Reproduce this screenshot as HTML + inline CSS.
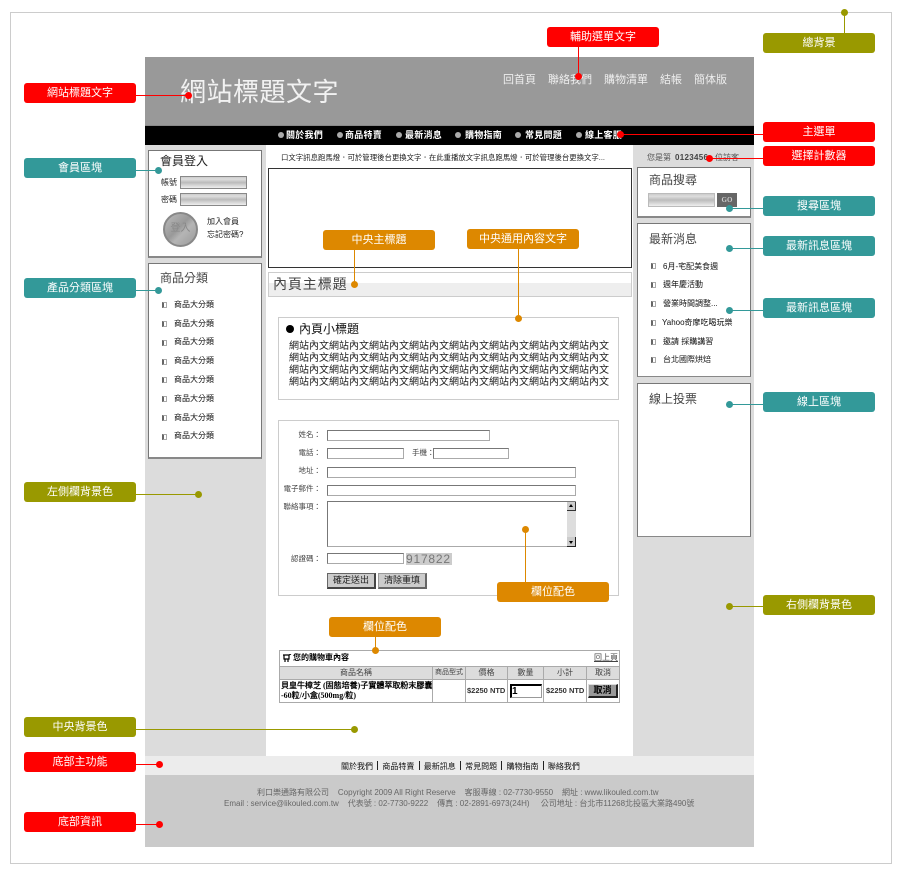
<!DOCTYPE html>
<html lang="zh-Hant"><head><meta charset="utf-8"><title>版面說明</title>
<style>
html,body{margin:0;padding:0;background:#fff}
body{position:relative;width:900px;height:872px;overflow:hidden;font-family:"Liberation Sans","WenQuanYi Zen Hei","Noto Sans CJK TC",sans-serif;color:#000}
div{position:absolute;box-sizing:border-box}
.t{white-space:nowrap;line-height:1}
.lb{width:112px;height:20px;border-radius:3px;color:#fff;font-size:11px;line-height:21px;text-align:center;z-index:5}
.r{background:#f00}.g{background:#339999}.o{background:#999900}.y{background:#dd8800}
.d{width:7px;height:7px;border-radius:50%;z-index:6}
.l{z-index:4}
.box{background:#fff;border:1px solid #777;border-bottom:2px solid #888}
.nav{color:#fff;font-size:9px;letter-spacing:.25px;font-weight:bold;top:131px}
.bul{width:6px;height:6px;border-radius:50%;background:#aaa;top:132px}
.h{font-size:12px;color:#444}
.it{font-size:8px;color:#111}
.sq{width:5px;height:6px;border:1px solid #aaa;border-left:2px solid #666;background:#fff}
.inp{background:#fff;border:1px solid #aaa;border-top-color:#777;border-left-color:#777}
.fl{font-size:7.5px;color:#444;text-align:right;width:60px;left:261px}
.grad{background:linear-gradient(#ccc,#ddd 20%,#bbb 50%,#eee);border:1px solid #888}
.btn{background:#ccc;border:1px solid #666;border-bottom:2px solid #444;border-right:2px solid #444;font-size:9px;text-align:center;line-height:13px;color:#222}
.th{background:#dcdcdc;color:#444;font-size:8px;text-align:center;line-height:12px;height:12px;top:667px}
.vl{background:#aaa;width:1px;top:667px;height:35px}
.para{font-size:10px;line-height:12px;left:289px;width:325px;color:#222;white-space:nowrap}
.sep{display:inline-block;width:1px;height:9px;background:#222;margin:0 4.2px;vertical-align:-1px}
</style></head><body>
<div style="left:10px;top:12px;width:882px;height:852px;border:1px solid #ccc"></div>

<!-- page -->
<div style="left:145px;top:57px;width:609px;height:790px;background:#dcdcdc"></div>
<div style="left:266px;top:144px;width:367px;height:612px;background:#fff"></div>
<div style="left:145px;top:57px;width:609px;height:69px;background:#999;border-bottom:1px solid #888"></div>
<div style="left:145px;top:126px;width:609px;height:19px;background:#000"></div>
<div style="left:145px;top:756px;width:609px;height:19px;background:#ececec"></div>
<div style="left:145px;top:775px;width:609px;height:72px;background:#cacaca"></div>

<div class="t" style="left:180px;top:79px;font-size:26px;color:#f2f2f2;letter-spacing:.5px">網站標題文字</div>
<div class="t" style="left:503px;top:75px;font-size:11px;color:#eee">回首頁</div>
<div class="t" style="left:548px;top:75px;font-size:11px;color:#eee">聯絡我們</div>
<div class="t" style="left:604px;top:75px;font-size:11px;color:#eee">購物清單</div>
<div class="t" style="left:660px;top:75px;font-size:11px;color:#eee">結帳</div>
<div class="t" style="left:694px;top:75px;font-size:11px;color:#eee">簡体版</div>

<div class="bul" style="left:278px"></div><div class="t nav" style="left:286px">關於我們</div>
<div class="bul" style="left:337px"></div><div class="t nav" style="left:345px">商品特賣</div>
<div class="bul" style="left:396px"></div><div class="t nav" style="left:405px">最新消息</div>
<div class="bul" style="left:455px"></div><div class="t nav" style="left:465px">購物指南</div>
<div class="bul" style="left:515px"></div><div class="t nav" style="left:525px">常見問題</div>
<div class="bul" style="left:576px"></div><div class="t nav" style="left:585px">線上客服</div>

<!-- left -->
<div class="box" style="left:148px;top:150px;width:114px;height:108px"></div>
<div class="t" style="left:160px;top:155px;font-size:12px;color:#222">會員登入</div>
<div class="t" style="left:161px;top:179px;font-size:8px;color:#222">帳號</div>
<div class="grad" style="left:180px;top:176px;width:67px;height:13px"></div>
<div class="t" style="left:161px;top:196px;font-size:8px;color:#222">密碼</div>
<div class="grad" style="left:180px;top:193px;width:67px;height:13px"></div>
<div style="left:163px;top:212px;width:35px;height:35px;border-radius:50%;background:linear-gradient(135deg,#bbb,#999 45%,#b5b5b5 60%,#999);border:2px solid #888;color:#888;font-size:10px;text-align:center;line-height:30px">登入</div>
<div class="t" style="left:207px;top:218px;font-size:8px;color:#222">加入會員</div>
<div class="t" style="left:207px;top:231px;font-size:8px;color:#222">忘記密碼?</div>

<div class="box" style="left:148px;top:263px;width:114px;height:196px"></div>
<div class="t h" style="left:160px;top:272px">商品分類</div>
<div class="sq" style="left:162px;top:302px"></div><div class="t it" style="left:174px;top:301px">商品大分類</div>
<div class="sq" style="left:162px;top:321px"></div><div class="t it" style="left:174px;top:320px">商品大分類</div>
<div class="sq" style="left:162px;top:340px"></div><div class="t it" style="left:174px;top:338px">商品大分類</div>
<div class="sq" style="left:162px;top:359px"></div><div class="t it" style="left:174px;top:357px">商品大分類</div>
<div class="sq" style="left:162px;top:377px"></div><div class="t it" style="left:174px;top:376px">商品大分類</div>
<div class="sq" style="left:162px;top:396px"></div><div class="t it" style="left:174px;top:395px">商品大分類</div>
<div class="sq" style="left:162px;top:415px"></div><div class="t it" style="left:174px;top:414px">商品大分類</div>
<div class="sq" style="left:162px;top:434px"></div><div class="t it" style="left:174px;top:432px">商品大分類</div>

<!-- center -->
<div class="t" style="left:281px;top:154px;font-size:7.4px;color:#222">口文字訊息跑馬燈．可於管理後台更換文字．在此重播放文字訊息跑馬燈．可於管理後台更換文字...</div>
<div style="left:268px;top:168px;width:364px;height:100px;border:1px solid #333;background:#fff"></div>
<div style="left:268px;top:272px;width:364px;height:25px;border:1px solid #ccc;background:linear-gradient(#fff 0,#fff 10px,#eee 10px)"></div>
<div class="t" style="left:273px;top:277px;font-size:14px;color:#444;letter-spacing:.9px">內頁主標題</div>
<div style="left:278px;top:317px;width:341px;height:83px;border:1px solid #ccc"></div>
<div style="left:286px;top:325px;width:8px;height:8px;border-radius:50%;background:#000"></div>
<div class="t" style="left:299px;top:323px;font-size:12px;color:#111">內頁小標題</div>
<div class="para" style="top:341px">網站內文網站內文網站內文網站內文網站內文網站內文網站內文網站內文</div>
<div class="para" style="top:353px">網站內文網站內文網站內文網站內文網站內文網站內文網站內文網站內文</div>
<div class="para" style="top:365px">網站內文網站內文網站內文網站內文網站內文網站內文網站內文網站內文</div>
<div class="para" style="top:377px">網站內文網站內文網站內文網站內文網站內文網站內文網站內文網站內文</div>

<div style="left:278px;top:420px;width:341px;height:176px;border:1px solid #ccc"></div>
<div class="t fl" style="top:431px">姓名：</div><div class="inp" style="left:327px;top:430px;width:163px;height:11px"></div>
<div class="t fl" style="top:449px">電話：</div><div class="inp" style="left:327px;top:448px;width:77px;height:11px"></div>
<div class="t" style="left:412px;top:449px;font-size:7.5px;color:#444">手機：</div><div class="inp" style="left:433px;top:448px;width:76px;height:11px"></div>
<div class="t fl" style="top:467px">地址：</div><div class="inp" style="left:327px;top:467px;width:249px;height:11px"></div>
<div class="t fl" style="top:485px">電子郵件：</div><div class="inp" style="left:327px;top:485px;width:249px;height:11px"></div>
<div class="t fl" style="top:503px">聯絡事項：</div><div class="inp" style="left:327px;top:501px;width:249px;height:46px"></div>
<div style="left:567px;top:502px;width:9px;height:45px;background:#ddd"></div>
<div style="left:567px;top:502px;width:9px;height:9px;background:#ccc;border:1px solid #333;border-width:0 1px 1px 0"></div>
<div style="left:567px;top:537px;width:9px;height:10px;background:#ccc;border:1px solid #222;border-width:0 1px 1px 0"></div>
<div style="left:569px;top:504px;border:2px solid transparent;border-bottom:3px solid #000;border-top:0"></div>
<div style="left:569px;top:541px;border:2px solid transparent;border-top:3px solid #000;border-bottom:0"></div>
<div class="t fl" style="top:555px">認證碼：</div><div class="inp" style="left:327px;top:553px;width:77px;height:11px"></div>
<div class="t" style="left:406px;top:553px;width:46px;height:12px;background:#ccc;color:#777;font-size:12px;line-height:12px;letter-spacing:.8px;overflow:hidden">917822</div>
<div class="btn" style="left:327px;top:573px;width:49px;height:16px">確定送出</div>
<div class="btn" style="left:378px;top:573px;width:49px;height:16px;border-color:#999 #666 #666 #999">清除重填</div>

<!-- table -->
<div style="left:279px;top:650px;width:341px;height:53px;border:1px solid #aaa"></div>
<div style="left:280px;top:666px;width:339px;height:1px;background:#aaa"></div>
<div class="th" style="left:280px;width:152px">商品名稱</div>
<div class="th" style="left:433px;width:32px;font-size:7px">商品型式</div>
<div class="th" style="left:466px;width:41px">價格</div>
<div class="th" style="left:508px;width:35px">數量</div>
<div class="th" style="left:544px;width:42px">小計</div>
<div class="th" style="left:587px;width:32px">取消</div>
<div style="left:280px;top:679px;width:339px;height:1px;background:#aaa"></div>
<div class="vl" style="left:432px"></div><div class="vl" style="left:465px"></div><div class="vl" style="left:507px"></div><div class="vl" style="left:543px"></div><div class="vl" style="left:586px"></div>
<svg style="position:absolute;left:283px;top:654px" width="9" height="9" viewBox="0 0 9 9"><path d="M0 1H6V5H1V1M2 5V8M5 5V8M6 1L8 0" fill="none" stroke="#000" stroke-width="1.2"/></svg>
<div class="t" style="left:293px;top:654px;font-size:8px;font-weight:bold">您的購物車內容</div>
<div class="t" style="left:594px;top:654px;font-size:8px;color:#444;text-decoration:underline">回上頁</div>
<div class="t" style="left:281px;top:681px;font-size:8px;line-height:10px;font-weight:bold;font-family:'Liberation Serif','WenQuanYi Zen Hei',serif">貝皇牛樟芝 (固態培養)子實體萃取粉末膠囊<br>-60粒/小盒(500mg/粒)</div>
<div class="t" style="left:467px;top:687px;font-size:7.5px;font-weight:bold;color:#333">$2250 NTD</div>
<div style="left:510px;top:684px;width:32px;height:14px;background:#fff;border:1px solid #999;border-top:2px solid #000;border-left:2px solid #000;font-size:10px;font-weight:bold;line-height:11px">1</div>
<div class="t" style="left:546px;top:687px;font-size:7.5px;font-weight:bold;color:#333">$2250 NTD</div>
<div style="left:588px;top:684px;width:30px;height:14px;background:#999;border-right:2px solid #222;border-bottom:2px solid #222;border-top:1px solid #ddd;border-left:1px solid #ddd;font-size:9px;font-weight:bold;text-align:center;line-height:11px">取消</div>

<!-- right -->
<div class="t" style="left:647px;top:154px;font-size:8px;color:#555">您是第</div>
<div class="t" style="left:675px;top:154px;font-size:8px;font-weight:bold;color:#444;letter-spacing:.3px">0123456</div>
<div class="t" style="left:715px;top:154px;font-size:8px;color:#555">位訪客</div>
<div class="box" style="left:637px;top:167px;width:114px;height:51px"></div>
<div class="t h" style="left:649px;top:174px">商品搜尋</div>
<div class="grad" style="left:648px;top:193px;width:67px;height:14px;border-color:#bbb"></div>
<div style="left:717px;top:193px;width:20px;height:14px;background:#666;color:#ccc;font-size:7px;font-weight:bold;text-align:center;line-height:14px;font-family:'Liberation Serif',serif">GO</div>

<div class="box" style="left:637px;top:223px;width:114px;height:154px;border-bottom-width:1px"></div>
<div class="t h" style="left:649px;top:233px">最新消息</div>
<div class="sq" style="left:651px;top:263px"></div><div class="t it" style="left:663px;top:263px">6月-宅配美食週</div>
<div class="sq" style="left:651px;top:282px"></div><div class="t it" style="left:663px;top:281px">週年慶活動</div>
<div class="sq" style="left:651px;top:301px"></div><div class="t it" style="left:663px;top:300px">營業時間調整...</div>
<div class="sq" style="left:651px;top:320px"></div><div class="t it" style="left:662px;top:319px">Yahoo奇摩吃喝玩樂</div>
<div class="sq" style="left:651px;top:339px"></div><div class="t it" style="left:663px;top:338px">邀請 採購講習</div>
<div class="sq" style="left:651px;top:357px"></div><div class="t it" style="left:663px;top:356px">台北國際烘焙</div>

<div class="box" style="left:637px;top:383px;width:114px;height:154px;border-bottom-width:1px"></div>
<div class="t h" style="left:649px;top:393px">線上投票</div>

<!-- footer -->
<div class="t" style="left:341px;top:761px;font-size:8px;color:#111">關於我們<span class="sep"></span>商品特賣<span class="sep"></span>最新訊息<span class="sep"></span>常見問題<span class="sep"></span>購物指南<span class="sep"></span>聯絡我們</div>
<div class="t" style="left:257px;top:789px;font-size:8px;color:#666">利口樂通路有限公司 &nbsp;&nbsp; Copyright 2009 All Right Reserve &nbsp;&nbsp; 客服專線 : 02-7730-9550 &nbsp;&nbsp; 網址 : www.likouled.com.tw</div>
<div class="t" style="left:224px;top:800px;font-size:8px;color:#666">Email : service@likouled.com.tw &nbsp;&nbsp; 代表號 : 02-7730-9222 &nbsp;&nbsp; 傳真 : 02-2891-6973(24H) &nbsp;&nbsp;&nbsp; 公司地址 : 台北市11268北投區大業路490號</div>

<!-- annotations -->
<div class="lb r" style="left:24px;top:83px">網站標題文字</div><div class="l r" style="left:136px;top:95px;width:52px;height:1px"></div><div class="d r" style="left:185px;top:92px"></div>
<div class="lb g" style="left:24px;top:158px">會員區塊</div><div class="l g" style="left:136px;top:170px;width:22px;height:1px"></div><div class="d g" style="left:155px;top:167px"></div>
<div class="lb g" style="left:24px;top:278px">產品分類區塊</div><div class="l g" style="left:136px;top:290px;width:22px;height:1px"></div><div class="d g" style="left:155px;top:287px"></div>
<div class="lb o" style="left:24px;top:482px">左側欄背景色</div><div class="l o" style="left:136px;top:494px;width:62px;height:1px"></div><div class="d o" style="left:195px;top:491px"></div>
<div class="lb o" style="left:24px;top:717px">中央背景色</div><div class="l o" style="left:136px;top:729px;width:218px;height:1px"></div><div class="d o" style="left:351px;top:726px"></div>
<div class="lb r" style="left:24px;top:752px">底部主功能</div><div class="l r" style="left:136px;top:764px;width:23px;height:1px"></div><div class="d r" style="left:156px;top:761px"></div>
<div class="lb r" style="left:24px;top:812px">底部資訊</div><div class="l r" style="left:136px;top:824px;width:23px;height:1px"></div><div class="d r" style="left:156px;top:821px"></div>

<div class="lb o" style="left:763px;top:33px">總背景</div><div class="l o" style="left:844px;top:12px;width:1px;height:21px"></div><div class="d o" style="left:841px;top:9px"></div>
<div class="lb r" style="left:547px;top:27px">輔助選單文字</div><div class="l r" style="left:578px;top:47px;width:1px;height:29px"></div><div class="d r" style="left:575px;top:73px"></div>
<div class="lb r" style="left:763px;top:122px">主選單</div><div class="l r" style="left:620px;top:134px;width:143px;height:1px"></div><div class="d r" style="left:617px;top:131px"></div>
<div class="lb r" style="left:763px;top:146px">選擇計數器</div><div class="l r" style="left:709px;top:158px;width:54px;height:1px"></div><div class="d r" style="left:706px;top:155px"></div>
<div class="lb g" style="left:763px;top:196px">搜尋區塊</div><div class="l g" style="left:729px;top:208px;width:34px;height:1px"></div><div class="d g" style="left:726px;top:205px"></div>
<div class="lb g" style="left:763px;top:236px">最新訊息區塊</div><div class="l g" style="left:729px;top:248px;width:34px;height:1px"></div><div class="d g" style="left:726px;top:245px"></div>
<div class="lb g" style="left:763px;top:298px">最新訊息區塊</div><div class="l g" style="left:729px;top:310px;width:34px;height:1px"></div><div class="d g" style="left:726px;top:307px"></div>
<div class="lb g" style="left:763px;top:392px">線上區塊</div><div class="l g" style="left:729px;top:404px;width:34px;height:1px"></div><div class="d g" style="left:726px;top:401px"></div>
<div class="lb o" style="left:763px;top:595px">右側欄背景色</div><div class="l o" style="left:729px;top:606px;width:34px;height:1px"></div><div class="d o" style="left:726px;top:603px"></div>

<div class="lb y" style="left:323px;top:230px">中央主標題</div><div class="l y" style="left:354px;top:250px;width:1px;height:34px"></div><div class="d y" style="left:351px;top:281px"></div>
<div class="lb y" style="left:467px;top:229px">中央通用內容文字</div><div class="l y" style="left:518px;top:249px;width:1px;height:69px"></div><div class="d y" style="left:515px;top:315px"></div>
<div class="lb y" style="left:497px;top:582px">欄位配色</div><div class="l y" style="left:525px;top:529px;width:1px;height:53px"></div><div class="d y" style="left:522px;top:526px"></div>
<div class="lb y" style="left:329px;top:617px">欄位配色</div><div class="l y" style="left:375px;top:637px;width:1px;height:13px"></div><div class="d y" style="left:372px;top:647px"></div>
</body></html>
